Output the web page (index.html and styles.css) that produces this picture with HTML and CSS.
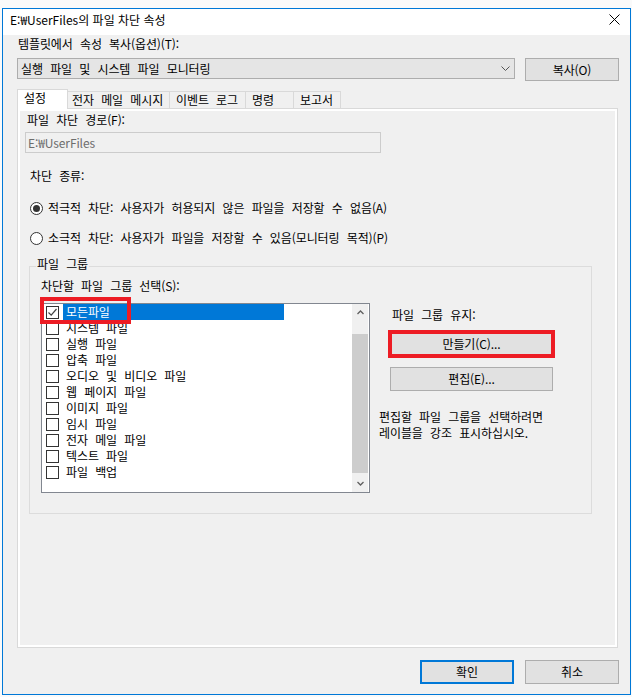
FILE: index.html
```html
<!DOCTYPE html>
<html lang="ko">
<head>
<meta charset="utf-8">
<title>파일 차단 속성</title>
<link rel="stylesheet" href="styles.css">
</head>
<body>
<div class="window">
  <div class="titlebar">
    <span class="title">E:₩UserFiles의 파일 차단 속성</span>
    <svg class="close" width="11" height="11" viewBox="0 0 11 11"><path d="M0.5 0.5L10.5 10.5M10.5 0.5L0.5 10.5" stroke="#000" stroke-width="1" fill="none"/></svg>
  </div>
  <div class="body">
    <div class="tpl-label">템플릿에서 속성 복사(옵션)(T):</div>
    <div class="tpl-row">
      <div class="combo">
        <span>실행 파일 및 시스템 파일 모니터링</span>
        <svg width="9" height="5" viewBox="0 0 9 5"><path d="M0.5 0.5L4.5 4.5L8.5 0.5" stroke="#555" stroke-width="1" fill="none"/></svg>
      </div>
      <div class="btn copy">복사(O)</div>
    </div>
    <div class="tabs">
      <div class="tab active t1">설정</div>
      <div class="tab t2">전자 메일 메시지</div>
      <div class="tab t3">이벤트 로그</div>
      <div class="tab t4">명령</div>
      <div class="tab t5">보고서</div>
    </div>
    <div class="panel">
      <div class="page">
        <div class="path-label">파일 차단 경로(F):</div>
        <div class="textbox">E:₩UserFiles</div>
        <div class="type-label">차단 종류:</div>
        <div class="radio-row first">
          <span class="radio"><span class="dot"></span></span>
          <span>적극적 차단: 사용자가 허용되지 않은 파일을 저장할 수 없음(A)</span>
        </div>
        <div class="radio-row">
          <span class="radio"></span>
          <span>소극적 차단: 사용자가 파일을 저장할 수 있음(모니터링 목적)(P)</span>
        </div>
        <fieldset class="group">
          <legend>파일 그룹</legend>
          <div class="group-body">
            <div class="left-col">
              <div class="sel-label">차단할 파일 그룹 선택(S):</div>
              <div class="listbox">
                <div class="items">
                  <div class="item"><span class="cb"><svg width="11" height="11" viewBox="0 0 11 11"><path d="M1.5 5.5L4.2 8.2L9.5 2" stroke="#444" stroke-width="1.2" fill="none"/></svg></span><span class="item-text selected">모든파일</span></div>
                  <div class="item"><span class="cb"></span><span class="item-text">시스템 파일</span></div>
                  <div class="item"><span class="cb"></span><span class="item-text">실행 파일</span></div>
                  <div class="item"><span class="cb"></span><span class="item-text">압축 파일</span></div>
                  <div class="item"><span class="cb"></span><span class="item-text">오디오 및 비디오 파일</span></div>
                  <div class="item"><span class="cb"></span><span class="item-text">웹 페이지 파일</span></div>
                  <div class="item"><span class="cb"></span><span class="item-text">이미지 파일</span></div>
                  <div class="item"><span class="cb"></span><span class="item-text">임시 파일</span></div>
                  <div class="item"><span class="cb"></span><span class="item-text">전자 메일 파일</span></div>
                  <div class="item"><span class="cb"></span><span class="item-text">텍스트 파일</span></div>
                  <div class="item"><span class="cb"></span><span class="item-text">파일 백업</span></div>
                </div>
                <div class="scrollbar">
                  <div class="sb-btn"><svg width="7" height="5" viewBox="0 0 7 5"><path d="M0.5 4L3.5 1L6.5 4" stroke="#606060" stroke-width="1.3" fill="none"/></svg></div>
                  <div class="sb-track"><div class="thumb"></div></div>
                  <div class="sb-btn"><svg width="7" height="5" viewBox="0 0 7 5"><path d="M0.5 1L3.5 4L6.5 1" stroke="#606060" stroke-width="1.3" fill="none"/></svg></div>
                </div>
                <div class="mark mark-item"></div>
              </div>
            </div>
            <div class="right-col">
              <div class="keep-label">파일 그룹 유지:</div>
              <div class="btn wide make">만들기(C)...</div>
              <div class="btn wide edit">편집(E)...</div>
              <div class="help">
                <div>편집할 파일 그룹을 선택하려면</div>
                <div>레이블을 강조 표시하십시오.</div>
              </div>
            </div>
          </div>
        </fieldset>
      </div>
    </div>
    <div class="footer">
      <div class="btn dlg ok">확인</div>
      <div class="btn dlg">취소</div>
    </div>
  </div>
</div>
</body>
</html>
```

FILE: styles.css
```css
* { box-sizing: border-box; }

body {
  margin: 0;
  background: #fafafa;
  font-family: "Noto Sans CJK KR", "Noto Sans", sans-serif;
  font-size: 12px;
  letter-spacing: -0.1px;
  word-spacing: 4px;
  color: #000;
}

.window {
  margin: 8px 0 0 2px;
  width: 629px;
  height: 687px;
  border: 1px solid #0078d7;
  background: #f0f0f0;
  display: flex;
  flex-direction: column;
}

.titlebar {
  flex: none;
  height: 26px;
  background: #fff;
  display: flex;
  justify-content: space-between;
  align-items: flex-start;
  padding: 0 10px 0 7px;
}
.title { line-height: 14px; margin-top: 4px; letter-spacing: 0; word-spacing: 0; }
.close { margin-top: 5px; }

.body {
  flex: 1;
  display: flex;
  flex-direction: column;
  padding: 0 11px 0 14px;
}

.tpl-label { margin: 2px 0 0 1px; line-height: 14px; }

.tpl-row { display: flex; align-items: flex-start; margin-top: 7px; }

.combo {
  width: 498px;
  height: 21px;
  border: 1px solid #adadad;
  background: #e5e5e5;
  display: flex;
  align-items: center;
  justify-content: space-between;
  padding: 0 4px 0 3px;
  line-height: 19px;
}

.btn {
  background: #e1e1e1;
  border: 1px solid #adadad;
  display: flex;
  align-items: center;
  justify-content: center;
  line-height: 14px;
}
.copy { width: 94px; height: 23px; margin-left: 10px; }

.tabs {
  display: flex;
  align-items: flex-end;
  height: 19px;
  margin-top: 8px;
  position: relative;
  z-index: 1;
}
.tab {
  height: 17px;
  border: 1px solid #d9d9d9;
  border-bottom: none;
  background: #f0f0f0;
  margin-left: -1px;
  padding-left: 6px;
  line-height: 15px;
  white-space: nowrap;
}
.tab.active {
  height: 20px;
  margin-left: 0;
  margin-bottom: -1px;
  padding-left: 6px;
  background: #fff;
  line-height: 16px;
}
.t1 { width: 51px; }
.t2 { width: 103px; padding-left: 4px; }
.t3 { width: 77px; }
.t4 { width: 49px; }
.t5 { width: 48px; }

.panel {
  width: 601px;
  height: 540px;
  border: 1px solid #d9d9d9;
  background: #fff;
  padding: 2px;
}
.page {
  height: 100%;
  background: #f0f0f0;
  padding: 2px 0 0 5px;
}

.path-label { margin-left: 2px; line-height: 14px; }

.textbox {
  margin-top: 5px;
  width: 356px;
  height: 21px;
  border: 1px solid #cccccc;
  background: #f0f0f0;
  color: #6d6d6d;
  padding-left: 2px;
  line-height: 19px;
}

.type-label { margin: 16px 0 0 5px; line-height: 14px; }

.radio-row {
  display: flex;
  align-items: center;
  height: 14px;
  margin: 16px 0 0 5px;
  line-height: 14px;
}
.radio-row.first { margin-top: 18px; }
.radio {
  flex: none;
  width: 13px;
  height: 13px;
  border: 1px solid #333;
  border-radius: 50%;
  background: #fff;
  margin-right: 5px;
  display: flex;
  align-items: center;
  justify-content: center;
}
.dot { width: 7px; height: 7px; border-radius: 50%; background: #333; }

.group {
  margin: 12px 0 0 4px;
  width: 563px;
  height: 257px;
  min-width: 0;
  border: 1px solid #dcdcdc;
  padding: 0 0 0 11px;
}
.group legend {
  margin-left: -5px;
  padding: 0 1px 5px 1px;
  line-height: 14px;
}

.group-body { display: flex; align-items: flex-start; }

.sel-label { margin-top: 3px; line-height: 14px; }

.listbox {
  position: relative;
  margin-top: 10px;
  width: 329px;
  height: 190px;
  border: 1px solid #828790;
  background: #fff;
  display: flex;
}
.items { flex: 1; }
.item {
  height: 16px;
  display: flex;
  align-items: center;
  padding-left: 4px;
}
.cb {
  flex: none;
  width: 13px;
  height: 13px;
  border: 1px solid #333;
  background: #fff;
  margin-right: 4px;
  display: flex;
  align-items: center;
  justify-content: center;
}
.item-text { height: 16px; line-height: 16px; padding-left: 3px; white-space: nowrap; }
.item-text.selected { width: 221px; background: #0078d7; color: #fff; }

.scrollbar {
  flex: none;
  width: 16px;
  margin-right: 1px;
  background: #f0f0f0;
  display: flex;
  flex-direction: column;
}
.sb-btn {
  height: 17px;
  display: flex;
  align-items: center;
  justify-content: center;
}
.sb-track { flex: 1; padding-top: 13px; }
.thumb { height: 139px; background: #cdcdcd; }

.mark {
  position: absolute;
  border: 4px solid #ed1c24;
}
.mark-item { left: -2px; top: -7px; width: 91px; height: 27px; }

.right-col { margin-left: 9px; padding-top: 32px; }
.keep-label { margin-left: 13px; line-height: 14px; }
.wide { width: 163px; height: 24px; margin-left: 11px; }
.make { margin-top: 10px; outline: 4px solid #ed1c24; outline-offset: -2px; }
.edit { margin-top: 11px; }
.help { margin-top: 18px; line-height: 16px; white-space: nowrap; }

.footer {
  display: flex;
  justify-content: flex-end;
  gap: 11px;
  margin-top: 12px;
}
.dlg { width: 94px; height: 24px; }
.ok { border: 2px solid #0078d7; }
```
